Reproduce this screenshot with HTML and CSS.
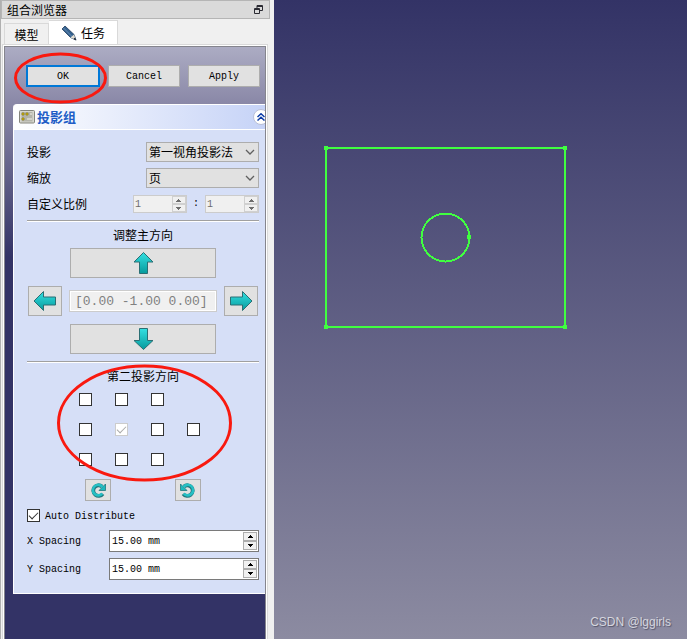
FILE: index.html
```html
<!DOCTYPE html>
<html lang="zh-CN">
<head>
<meta charset="utf-8">
<title>组合浏览器</title>
<link rel="stylesheet" href="styles.css">
</head>
<body>
<svg class="defs" width="0" height="0" aria-hidden="true">
  <defs>
    <linearGradient id="teal" x1="0" y1="0" x2="0" y2="1"><stop offset="0" stop-color="#34e0e2"/><stop offset="1" stop-color="#069a9c"/></linearGradient>
    <linearGradient id="teal-side" x1="0" y1="0" x2="1" y2="0"><stop offset="0" stop-color="#069a9c"/><stop offset="1" stop-color="#34e0e2"/></linearGradient>
    <symbol id="arrow-up" viewBox="0 0 24 24"><path d="M12.500 1.500 22 11H16.500V22.500H8.500V11H3Z" fill="url(#teal)" stroke="#2b6f74"/></symbol>
    <symbol id="arrow-down" viewBox="0 0 24 24"><path d="M12.500 22.500 22 13.500H16.500V1.500H8.500V13.500H3Z" fill="url(#teal)" stroke="#2b6f74"/></symbol>
    <symbol id="arrow-left" viewBox="0 0 24 24"><path d="M1 12 10.500 2.500V8H22.500V16H10.500V21.500Z" fill="url(#teal)" stroke="#2b6f74"/></symbol>
    <symbol id="arrow-right" viewBox="0 0 24 24"><path d="M23 12 13.500 2.500V8H1.500V16H13.500V21.500Z" fill="url(#teal)" stroke="#2b6f74"/></symbol>
    <symbol id="turn" viewBox="0 0 16 16"><path d="M12.800 11.800A5.300 5.300 0 1 1 12 4.500" fill="none" stroke="#23777c" stroke-width="3.800"/><path d="M15.500 2V8.500H9Z" fill="#1fb9bd" stroke="#23777c" stroke-width=".8"/><path d="M12.300 11.500A5.300 5.300 0 1 1 12.500 5" fill="none" stroke="#25c0c4" stroke-width="2.600"/></symbol>
    <symbol id="spin-up" viewBox="0 0 5 3"><path d="M0 3V2H1V1H2V0H3V1H4V2H5V3Z" fill="currentColor"/></symbol>
    <symbol id="chevron" viewBox="0 0 10 6"><path d="M1 1 5 5 9 1" fill="none" stroke="#606060" stroke-width="1.300"/></symbol>
  </defs>
</svg>
<div class="app">
  <aside class="dock">
    <header class="dock-title"><span>组合浏览器</span>
      <button class="float-button" aria-label="浮动"><svg width="9" height="9" viewBox="0 0 9 9"><path d="M3 3V.5H8.500V5.500H6M3 1.500H8.500M.5 3.500H5.500V8.500H.5ZM.5 4.500H5.500" fill="none" stroke="#2b2b33"/></svg></button>
    </header>
    <nav class="tabs">
      <button class="tab">模型</button>
      <button class="tab active"><svg width="16" height="16" viewBox="0 0 16 16"><path d="M1 4 4 1 13 9.500 15 15 9.500 12.500Z" fill="#34618f" stroke="#203e5f" stroke-width=".8"/><path d="M2.500 3 11 11.500" stroke="#6d91b5" stroke-width="1"/><path d="M9.500 12.500 13 9.500 14 12.500 12.500 13.900Z" fill="#e5dfd2"/><path d="M13.500 13 15.500 15.500 12.500 14Z" fill="#222"/></svg>任务</button>
    </nav>
    <main class="pane">
      <div class="actions">
        <button class="push default">OK</button>
        <button class="push">Cancel</button>
        <button class="push">Apply</button>
      </div>
      <section class="task">
        <header class="task-header">
          <svg width="16" height="14" viewBox="0 0 16 14"><rect x=".5" y=".5" width="15" height="12.500" rx="1" fill="#d6d6ce" stroke="#85857d"/><rect x="2.500" y="2" width="11" height="9.500" fill="#b4b3aa"/><path d="M3 3h2v2H3zM7 3h2v2H7zM3 8h2v2H3z" fill="#f5d50d" stroke="#80700f" stroke-width=".7"/><path d="M11 4h2M8 9h5" stroke="#efefe7"/></svg>
          <h2>投影组</h2>
          <button class="collapse" aria-label="折叠"><svg width="8" height="8" viewBox="0 0 8 8"><path d="M.5 4 4 .8 7.500 4M.5 7.500 4 4.300 7.500 7.500" fill="none" stroke="#0b3aa5" stroke-width="1.500"/></svg></button>
        </header>
        <div class="task-body">
          <div class="field"><label for="projection">投影</label>
            <span class="combo"><select id="projection"><option>第一视角投影法</option></select><svg width="10" height="6"><use href="#chevron"/></svg></span></div>
          <div class="field"><label for="scale">缩放</label>
            <span class="combo"><select id="scale"><option>页</option></select><svg width="10" height="6"><use href="#chevron"/></svg></span></div>
          <div class="field"><label for="ratio-a">自定义比例</label>
            <span class="ratio">
              <span class="spin disabled"><input id="ratio-a" value="1" disabled><span class="steps"><button disabled aria-label="增加"><svg width="5" height="3"><use href="#spin-up"/></svg></button><button disabled aria-label="减少"><svg width="5" height="3" class="down"><use href="#spin-up"/></svg></button></span></span>
              <span>:</span>
              <span class="spin disabled"><input value="1" aria-label="比例分母" disabled><span class="steps"><button disabled aria-label="增加"><svg width="5" height="3"><use href="#spin-up"/></svg></button><button disabled aria-label="减少"><svg width="5" height="3" class="down"><use href="#spin-up"/></svg></button></span></span>
            </span></div>
          <hr>
          <h3>调整主方向</h3>
          <div class="direction">
            <button class="push wide" aria-label="上"><svg width="24" height="24"><use href="#arrow-up"/></svg></button>
            <button class="push left" aria-label="左"><svg width="24" height="24"><use href="#arrow-left"/></svg></button>
            <input class="vector" value="[0.00 -1.00 0.00]" aria-label="方向" disabled>
            <button class="push" aria-label="右"><svg width="24" height="24"><use href="#arrow-right"/></svg></button>
            <button class="push wide" aria-label="下"><svg width="24" height="24"><use href="#arrow-down"/></svg></button>
          </div>
          <hr>
          <h3>第二投影方向</h3>
          <div class="views">
            <input type="checkbox" aria-label="左上"><input type="checkbox" aria-label="上"><input type="checkbox" aria-label="右上">
            <input class="row-start" type="checkbox" aria-label="左"><input type="checkbox" aria-label="主视图" checked disabled><input type="checkbox" aria-label="右"><input type="checkbox" aria-label="后">
            <input type="checkbox" aria-label="左下"><input type="checkbox" aria-label="下"><input type="checkbox" aria-label="右下">
          </div>
          <div class="rotate">
            <button class="push" aria-label="顺时针"><svg width="16" height="16"><use href="#turn"/></svg></button>
            <button class="push" aria-label="逆时针"><svg width="16" height="16" class="flip"><use href="#turn"/></svg></button>
          </div>
          <label class="auto"><input type="checkbox" checked><span>Auto Distribute</span></label>
          <div class="spacing"><label for="sx">X Spacing</label><span class="spin"><input id="sx" value="15.00 mm"><span class="steps"><button aria-label="增加"><svg width="5" height="3"><use href="#spin-up"/></svg></button><button aria-label="减少"><svg width="5" height="3" class="down"><use href="#spin-up"/></svg></button></span></span></div>
          <div class="spacing"><label for="sy">Y Spacing</label><span class="spin"><input id="sy" value="15.00 mm"><span class="steps"><button aria-label="增加"><svg width="5" height="3"><use href="#spin-up"/></svg></button><button aria-label="减少"><svg width="5" height="3" class="down"><use href="#spin-up"/></svg></button></span></span></div>
        </div>
      </section>
    </main>
    <svg class="marks" width="274" height="500" aria-hidden="true"><g fill="none" stroke="#f9190f" stroke-width="3"><ellipse cx="60.500" cy="78" rx="45" ry="24"/><ellipse cx="144.500" cy="423" rx="86" ry="57"/></g></svg>
  </aside>
  <section class="viewport" aria-label="三维视图">
    <svg class="sketch" width="300" height="340" shape-rendering="crispEdges"><g fill="none" stroke="#40ff40" stroke-width="2"><rect x="52" y="148" width="239" height="179"/><circle cx="171.500" cy="237.500" r="24"/></g><path d="M50 146h4v4h-4zM289 146h4v4h-4zM50 325h4v4h-4zM289 325h4v4h-4zM193 235h4v4h-4z" fill="#40ff40"/></svg>
    <span class="credit">CSDN @lggirls</span>
  </section>
</div>
</body>
</html>
```
FILE: styles.css
```css
* { box-sizing: border-box; }
body {
  margin: 0;
  font: 12px/14px "Noto Sans CJK SC", sans-serif;
  color: #000;
}
button, input, select {
  font: 10px/14px "Liberation Mono", "Noto Sans CJK SC", monospace;
  color: inherit;
  margin: 0;
  padding: 0;
  border-radius: 0;
}
button { display: flex; align-items: center; justify-content: center; }
svg { display: block; flex: none; }
.defs { position: absolute; }
.app { display: flex; min-height: 100vh; }

.dock {
  position: relative;
  flex: none;
  display: flex;
  flex-direction: column;
  width: 274px;
  padding: 0 7px 0 3px;
  background: #f0f0f0;
  border-left: 1px solid #b0b0b0;
}
.dock-title {
  display: flex;
  align-items: center;
  justify-content: space-between;
  height: 19px;
  margin: 0 -3px;
  padding: 0 6px 0 5px;
  background: #dadada;
  border: 1px solid #b5b5b5;
}
.float-button { border: 0; background: none; }
.tabs { display: flex; align-items: flex-end; height: 26px; }
.tab {
  height: 22px;
  width: 45px;
  font: 12px/14px "Noto Sans CJK SC", sans-serif;
  background: #f0f0f0;
  border: 1px solid #d9d9d9;
  border-bottom: 0;
}
.tab.active { width: 69px; height: 25px; gap: 4px; background: #fff; border-left: 0; }

.pane {
  flex: 1;
  border: 1px solid #85858d;
  border-bottom: 0;
  margin-top: 1px;
  margin-right: 1px;
  box-shadow: 0 0 0 1px #fff, 0 0 0 2px #d9d9d9;
  background: linear-gradient(#acacc3, #8a88a7 56px, #333366 210px);
  overflow: hidden;
}
.push { background: #e1e1e1; border: 1px solid #adadad; }
.actions { display: flex; gap: 8px; padding: 18px 5px 17px 21px; }
.actions .push { flex: 1; height: 22px; padding-top: 2px; }
.actions .default { padding-top: 1px; border: 2px solid #0078d7; }

.task { margin-left: 8px; }
.task-header {
  display: flex;
  align-items: center;
  height: 25px;
  padding-left: 6px;
  border-top: 1px solid #fff;
  border-radius: 4px 0 0 0;
  background: linear-gradient(90deg, #fff, #c6d3f7);
}
.task-header h2 { flex: 1; margin: 0 0 0 2px; font-size: 13px; line-height: 16px; color: #215dc6; }
.collapse { width: 16px; height: 16px; margin-right: -4px; border: 1px solid #b9bfd6; border-radius: 8px; background: #fff; }
.task-body {
  display: flex;
  flex-direction: column;
  padding: 12px 6px 13px 13px;
  background: #d6dff7;
  border: solid #fff;
  border-width: 1px 0 1px 1px;
}
.field { display: flex; align-items: center; justify-content: space-between; height: 20px; margin-bottom: 6px; }
.combo { position: relative; width: 113px; }
.combo select {
  appearance: none;
  display: block;
  width: 100%;
  height: 20px;
  padding-left: 2px;
  font: 12px/14px "Noto Sans CJK SC", sans-serif;
  background: #e1e1e1;
  border: 1px solid #adadad;
}
.combo svg { position: absolute; right: 4px; top: 7px; pointer-events: none; }
.ratio { display: flex; align-items: center; gap: 6px; font: 10px/14px "Liberation Mono", monospace; }
.spin { display: flex; flex: 1; height: 22px; padding: 1px; background: #fff; border: 1px solid #7a7a7a; }
.spin input { flex: 1; width: 0; min-width: 0; padding: 2px 0 0 1px; border: 0; background: none; }
.steps { display: flex; flex-direction: column; width: 14px; }
.steps button { flex: 1; min-height: 0; background: #f0f0f0; border: 1px solid #adadad; }
.down { transform: rotate(180deg); }
.spin.disabled { flex: none; width: 54px; height: 18px; background: #f0f0f0; border-color: #ccc; color: #6d6d6d; padding: 0; }
.spin.disabled .steps button { border-color: #d0d0d0; }
hr { width: 100%; height: 2px; margin: 0; border: solid; border-color: #a0a0a0 #fff #fff; border-width: 1px 0; }
h3 { margin: 6px 0; font-size: 12px; line-height: 14px; font-weight: 400; text-align: center; }
.direction {
  display: grid;
  grid-template-columns: 34px 1fr 34px;
  gap: 8px 7px;
  align-items: center;
  padding: 0 1px;
  margin-bottom: 7px;
}
.direction .push { height: 30px; }
.direction .wide { grid-column: 2; margin: 0 1px; }
.direction .left { grid-column: 1; }
.vector {
  width: 100%;
  min-width: 0;
  height: 22px;
  padding: 0 5px;
  font-size: 13px;
  color: #808080;
  background: #f0f0f0;
  border: 1px solid #ccc;
  box-shadow: inset 0 0 0 1px #fff;
}

input[type="checkbox"] {
  appearance: none;
  display: grid;
  flex: none;
  width: 13px;
  height: 13px;
  background: #fff;
  border: 1px solid #333;
}
input[type="checkbox"]:checked::before {
  content: "";
  width: 8px;
  height: 4px;
  margin: 2px 0 0 1px;
  border: solid #333;
  border-width: 0 0 1px 1px;
  transform: rotate(-45deg);
}
input[type="checkbox"]:disabled { border-color: #ccc; }
input[type="checkbox"]:disabled::before { border-color: #aaa; }
.views { display: grid; grid-template-columns: repeat(4, 13px); gap: 17px 23px; margin: 4px 0 0 52px; }
.row-start { grid-column: 1; }
.rotate { display: flex; gap: 64px; margin: 13px 0 8px 58px; }
.rotate .push { width: 26px; height: 22px; }
.flip { transform: scaleX(-1); }
.auto { display: flex; align-items: center; gap: 5px; height: 13px; margin-bottom: 8px; font: 10px/14px "Liberation Mono", monospace; }
.auto span, .spacing label { padding-top: 2px; }
.spacing { display: flex; align-items: center; margin-bottom: 6px; font: 10px/14px "Liberation Mono", monospace; }
.spacing:last-child { margin-bottom: 0; }
.spacing label { width: 82px; }
.marks { position: absolute; top: 0; left: -1px; pointer-events: none; }

.viewport { position: relative; flex: 1; overflow: hidden; background: linear-gradient(#333366, #8c8ba1); }
.sketch { position: absolute; top: 0; left: 0; }
.credit {
  position: absolute;
  right: 16px;
  bottom: 10px;
  font: 12px/14px "Liberation Sans", sans-serif;
  color: #d6d6de;
  text-shadow: 1px 1px 1px #55556a;
}
```
